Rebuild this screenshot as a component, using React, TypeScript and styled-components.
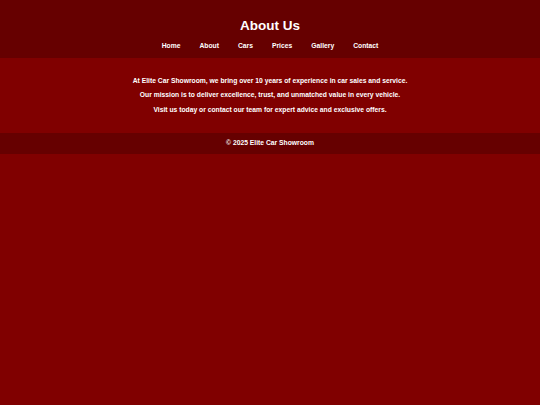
import React from "react";
import styled, { createGlobalStyle } from "styled-components";

const GlobalStyle = createGlobalStyle`
  html, body {
    margin: 0;
    padding: 0;
    background: #800000;
    color: #ffffff;
    font-family: "Liberation Sans", Arial, sans-serif;
  }
`;

const navItems = ["Home", "About", "Cars", "Prices", "Gallery", "Contact"];

const paragraphs = [
  "At Elite Car Showroom, we bring over 10 years of experience in car sales and service.",
  "Our mission is to deliver excellence, trust, and unmatched value in every vehicle.",
  "Visit us today or contact our team for expert advice and exclusive offers.",
];

export default function App() {
  return (
    <>
      <GlobalStyle />
      <Header>
        <Title>About Us</Title>
        <Nav>
          {navItems.map((item) => (
            <NavLink key={item} href="#">
              {item}
            </NavLink>
          ))}
        </Nav>
      </Header>
      <Main>
        {paragraphs.map((text) => (
          <Paragraph key={text}>{text}</Paragraph>
        ))}
      </Main>
      <Footer>© 2025 Elite Car Showroom</Footer>
    </>
  );
}

const Header = styled.header`
  background: #660000;
  height: 58px;
  box-sizing: border-box;
  padding-top: 17.5px;
  text-align: center;
`;

const Title = styled.h1`
  margin: 0 0 8.5px;
  font-size: 13.5px;
  font-weight: bold;
  line-height: 15.5px;
`;

const Nav = styled.nav`
  display: flex;
  justify-content: center;
  gap: 19px;
`;

const NavLink = styled.a`
  color: #ffffff;
  text-decoration: none;
  font-size: 6.75px;
  font-weight: bold;
  line-height: 7.75px;
`;

const Main = styled.main`
  padding: 12.5px 20px;
  text-align: center;
`;

const Paragraph = styled.p`
  margin: 6.67px 0;
  font-size: 6.75px;
  font-weight: bold;
  line-height: 7.67px;
`;

const Footer = styled.footer`
  background: #660000;
  padding: 6.67px 0;
  text-align: center;
  font-size: 6.75px;
  font-weight: bold;
  line-height: 7.67px;
`;
